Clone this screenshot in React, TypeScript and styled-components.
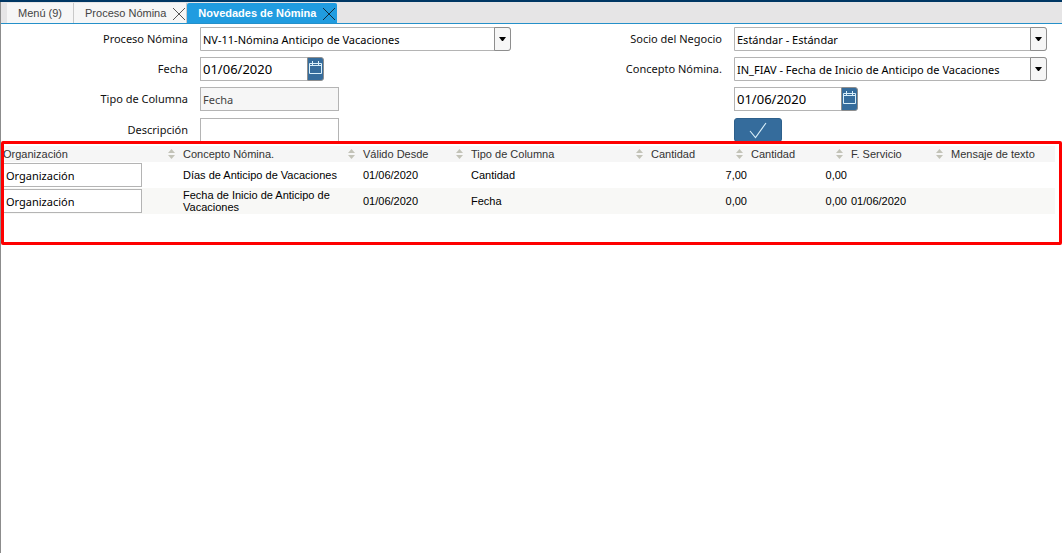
import React, { useState } from "react";
import styled, { createGlobalStyle, css } from "styled-components";

const sans = `"Liberation Sans", Arial, sans-serif`;
const noto = `"Noto Sans", "Open Sans", sans-serif`;

const GlobalStyle = createGlobalStyle`
  * { box-sizing: border-box; }
  body { margin: 0; background: #fff; font-family: ${sans}; font-size: 11px; color: #000; }
`;

const Page = styled.div`
  min-height: 100vh;
  display: flex;
  flex-direction: column;
  border-top: 2px solid #003764;
`;

const Workspace = styled.div`
  flex: 1;
  border-left: 1px solid #8c8c8c;
`;

const TabBar = styled.nav`
  display: flex;
  height: 22px;
  padding: 1px 0 0 6px;
  background: #e6e5e6;
  border-bottom: 1px solid #2590c9;
`;

const Tab = styled.div<{ $active?: boolean }>`
  display: flex;
  align-items: center;
  background: ${(p) => (p.$active ? "#209ce0" : "#f6f6f6")};
  border-right: 1px solid ${(p) => (p.$active ? "#209ce0" : "#c9c9c9")};
  border-radius: ${(p) => (p.$active ? "2px 2px 0 0" : "0")};
`;

const TabLabel = styled.button<{ $active?: boolean }>`
  border: 0;
  padding: 0 11px;
  background: none;
  font: ${(p) => (p.$active ? "bold" : "normal")} 11px ${sans};
  color: ${(p) => (p.$active ? "#fff" : "#444")};
  white-space: nowrap;
`;

const TabClose = styled.button<{ $active?: boolean }>`
  display: flex;
  border: 0;
  padding: 2px 0 0;
  margin-left: -5px;
  background: none;
  color: ${(p) => (p.$active ? "#10202c" : "#444")};
`;

const Form = styled.form`
  display: grid;
  grid-template-columns: 187fr 311fr 199fr 313fr;
  grid-template-rows: 24px 24px 25px 24px;
  align-items: start;
  column-gap: 12px;
  row-gap: 6px;
  padding: 3px 15px 0 0;
`;

const Label = styled.label`
  padding: 4px 0;
  text-align: right;
  font: 11px/16px ${noto};
  color: #111;
`;

const control = css`
  height: 24px;
  min-width: 0;
  border: 1px solid #b4b4b4;
  border-radius: 0;
  margin: 0;
  background: #fff;
  color: #000;
  outline: 0;
`;

const TextBox = styled.input`
  ${control}
  width: 139px;
  padding: 0 2px;
  font: 11px/16px ${noto};
  &:read-only { background: #f6f6f6; color: #444; }
`;

const ComboBox = styled.div`
  display: grid;
  grid-template-columns: 1fr 17px;
`;

const ComboSelect = styled.select`
  ${control}
  grid-area: 1 / 1 / 2 / 3;
  appearance: none;
  width: 100%;
  padding: 2px 20px 0 2px;
  border-radius: 0 3px 3px 0;
  font: 11px/16px ${noto};
`;

const ComboArrow = styled.span`
  grid-area: 1 / 2 / 2 / 3;
  display: flex;
  align-items: center;
  justify-content: center;
  border: 1px solid #8e8e8e;
  border-radius: 0 3px 3px 0;
  background: #f6f6f6;
  pointer-events: none;
`;

const DateBox = styled.div`
  display: flex;
`;

const DateInput = styled.input`
  ${control}
  width: 107px;
  padding: 0 2px;
  border-right: 0;
  font: 13px/18px ${noto};
`;

const DateButton = styled.button`
  display: flex;
  align-items: center;
  justify-content: center;
  width: 17px;
  height: 24px;
  padding: 0 0 3px;
  border: 1px solid #8e8e8e;
  border-radius: 0 3px 3px 0;
  background: #356c9c;
`;

const ConfirmButton = styled.button`
  display: flex;
  align-items: center;
  justify-content: center;
  width: 48px;
  height: 24px;
  padding: 0;
  border: 1px solid #2d608c;
  border-radius: 3px;
  background: #356c9c;
`;

const Blank = styled.span``;

const Highlight = styled.section`
  position: relative;
  margin-top: -1px;
  padding: 5px 7px 31px 0;
  background: #fff;
  &::after {
    content: "";
    position: absolute;
    inset: 0;
    border: 3px solid #fe0000;
    border-radius: 2px;
    pointer-events: none;
  }
`;

const Grid = styled.table`
  width: 100%;
  table-layout: fixed;
  border-collapse: collapse;
  font: 11px/12px ${sans};
`;

const HeadCell = styled.th`
  height: 16px;
  padding: 0 6px 0 2px;
  background: #f6f6f6;
  color: #333;
  font-weight: normal;
  text-align: left;
`;

const HeadContent = styled.span`
  display: flex;
  align-items: center;
  justify-content: space-between;
  white-space: nowrap;
`;

const Row = styled.tr`
  &:nth-child(even) { background: #f8f8f6; }
`;

const Cell = styled.td<{ $right?: boolean }>`
  height: 26px;
  padding: 0 2px;
  text-align: ${(p) => (p.$right ? "right" : "left")};
`;

const CellInput = styled(TextBox)`
  display: block;
`;

const CloseIcon = () => (
  <svg width="14" height="14" viewBox="0 0 14 14" aria-hidden="true">
    <path d="M1 1 13 13M13 1 1 13" stroke="currentColor" strokeWidth="0.9" fill="none" />
  </svg>
);

const CalendarIcon = () => (
  <svg width="13" height="13" viewBox="0 0 13 13" aria-hidden="true">
    <path d="M.5 2.500h12v10H.5zM.5 4.500h12M3.500 0v4M9.500 0v4" stroke="#d8effa" fill="none" />
  </svg>
);

const SortIcon = () => (
  <svg width="7" height="10" viewBox="0 0 7 10" aria-hidden="true">
    <path d="M0 4 3.500 0 7 4zM0 6h7L3.500 10z" fill="#c3c3b8" />
  </svg>
);

const Combo = ({ id, value }: { id: string; value: string }) => (
  <ComboBox>
    <ComboSelect id={id} defaultValue={value}>
      <option>{value}</option>
    </ComboSelect>
    <ComboArrow aria-hidden="true">
      <svg width="7" height="4" viewBox="0 0 7 4">
        <path d="M0 0h7L4 4H3z" fill="#000" />
      </svg>
    </ComboArrow>
  </ComboBox>
);

const DateField = ({ id, label }: { id: string; label?: string }) => (
  <DateBox>
    <DateInput id={id} aria-label={label} defaultValue="01/06/2020" />
    <DateButton type="button" aria-label="Calendario">
      <CalendarIcon />
    </DateButton>
  </DateBox>
);

const tabs = [
  { name: "Menú (9)", closable: false },
  { name: "Proceso Nómina", closable: true },
  { name: "Novedades de Nómina", closable: true },
];

const columns = [
  { name: "Organización", width: 180 },
  { name: "Concepto Nómina.", width: 180 },
  { name: "Válido Desde", width: 108 },
  { name: "Tipo de Columna", width: 180 },
  { name: "Cantidad", width: 100 },
  { name: "Cantidad", width: 100 },
  { name: "F. Servicio", width: 100 },
  { name: "Mensaje de texto", width: 106 },
];
const totalWidth = columns.reduce((sum, c) => sum + c.width, 0);

const rows = [
  ["Días de Anticipo de Vacaciones", "01/06/2020", "Cantidad", "7,00", "0,00", "", ""],
  ["Fecha de Inicio de Anticipo de Vacaciones", "01/06/2020", "Fecha", "0,00", "0,00", "01/06/2020", ""],
];

export default function App() {
  const [active, setActive] = useState(2);
  return (
    <Page>
      <GlobalStyle />
      <Workspace>
        <TabBar>
          {tabs.map((tab, i) => (
            <Tab key={tab.name} $active={i === active}>
              <TabLabel $active={i === active} onClick={() => setActive(i)}>
                {tab.name}
              </TabLabel>
              {tab.closable && (
                <TabClose $active={i === active} aria-label={`Cerrar ${tab.name}`}>
                  <CloseIcon />
                </TabClose>
              )}
            </Tab>
          ))}
        </TabBar>

        <Form onSubmit={(e) => e.preventDefault()}>
          <Label htmlFor="proceso">Proceso Nómina</Label>
          <Combo id="proceso" value="NV-11-Nómina Anticipo de Vacaciones" />
          <Label htmlFor="socio">Socio del Negocio</Label>
          <Combo id="socio" value="Estándar - Estándar" />

          <Label htmlFor="fecha">Fecha</Label>
          <DateField id="fecha" />
          <Label htmlFor="concepto">Concepto Nómina.</Label>
          <Combo id="concepto" value="IN_FIAV - Fecha de Inicio de Anticipo de Vacaciones" />

          <Label htmlFor="tipo">Tipo de Columna</Label>
          <TextBox id="tipo" defaultValue="Fecha" readOnly />
          <Blank />
          <DateField id="servicio" label="Fecha de servicio" />

          <Label htmlFor="descripcion">Descripción</Label>
          <TextBox id="descripcion" />
          <Blank />
          <ConfirmButton type="submit" aria-label="Aceptar">
            <svg width="18" height="17" viewBox="0 0 18 17" aria-hidden="true">
              <path d="M1 9 6.500 15.500 17 1" stroke="#d8effa" strokeWidth="1.1" fill="none" />
            </svg>
          </ConfirmButton>
        </Form>

        <Highlight>
          <Grid>
            <colgroup>
              {columns.map((c, i) => (
                <col key={i} style={{ width: `${(c.width / totalWidth) * 100}%` }} />
              ))}
            </colgroup>
            <thead>
              <tr>
                {columns.map((c, i) => (
                  <HeadCell key={i} scope="col">
                    <HeadContent>
                      {c.name}
                      {i < columns.length - 1 && <SortIcon />}
                    </HeadContent>
                  </HeadCell>
                ))}
              </tr>
            </thead>
            <tbody>
              {rows.map((row) => (
                <Row key={row[0]}>
                  <Cell>
                    <CellInput aria-label="Organización" defaultValue="Organización" />
                  </Cell>
                  {row.map((text, i) => (
                    <Cell key={i} $right={i === 3 || i === 4}>
                      {text}
                    </Cell>
                  ))}
                </Row>
              ))}
            </tbody>
          </Grid>
        </Highlight>
      </Workspace>
    </Page>
  );
}
